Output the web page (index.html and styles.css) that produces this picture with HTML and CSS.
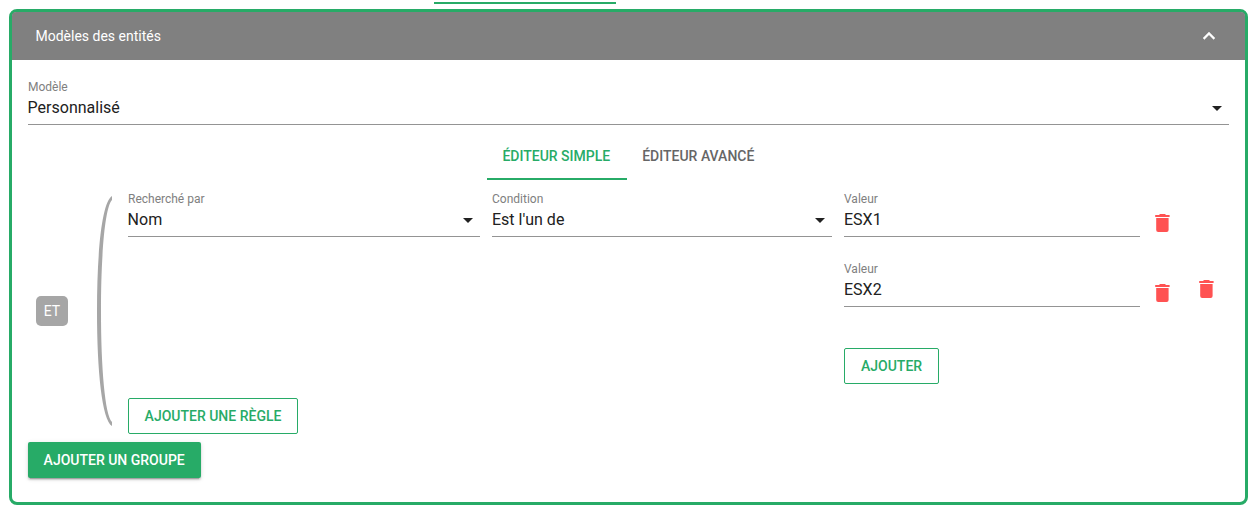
FILE: index.html
```html
<!DOCTYPE html>
<html lang="fr">
<head>
<meta charset="utf-8">
<title>Modèles des entités</title>
<link rel="stylesheet" href="styles.css">
</head>
<body>
<svg class="defs" width="0" height="0">
  <symbol id="trash" viewBox="0 0 24 24"><path d="M19.6 4H16l-1-1h-5l-1 1H5.2v2h14.4zM6.2 19a2 2 0 0 0 2 2h8.4a2 2 0 0 0 2-2V7H6.2z"/></symbol>
  <symbol id="caret" viewBox="0 0 24 24"><path d="M7 10l5 5 5-5z"/></symbol>
</svg>
<div class="outer-tabs"><span class="outer-indicator"></span></div>
<section class="panel">
  <header class="panel-header">
    <span>Modèles des entités</span>
    <svg class="icon chevron" viewBox="0 0 24 24"><path d="M7.41 15.41L12 10.83l4.59 4.58L18 14l-6-6-6 6z"/></svg>
  </header>
  <div class="panel-body">
    <div class="field">
      <label class="label">Modèle</label>
      <div class="value nudged"><span>Personnalisé</span><svg class="icon"><use href="#caret"/></svg></div>
    </div>
    <nav class="tabs">
      <a class="tab active">ÉDITEUR SIMPLE</a>
      <a class="tab">ÉDITEUR AVANCÉ</a>
    </nav>
    <div class="group">
      <span class="operator">ET</span>
      <svg class="bracket" viewBox="0 0 15 230"><path d="M15 0C5 6 0 55 0 115S5 224 15 230V226C8 219 4 172 4 115S8 11 15 4Z"/></svg>
      <div class="rules">
        <div class="rule">
          <div class="field">
            <label class="label">Recherché par</label>
            <div class="value nudged"><span>Nom</span><svg class="icon"><use href="#caret"/></svg></div>
          </div>
          <div class="field">
            <label class="label">Condition</label>
            <div class="value"><span>Est l'un de</span><svg class="icon"><use href="#caret"/></svg></div>
          </div>
          <div class="values">
            <div class="value-row">
              <div class="field"><label class="label">Valeur</label><div class="value"><span>ESX1</span></div></div>
              <svg class="icon delete"><use href="#trash"/></svg>
            </div>
            <div class="value-row">
              <div class="field"><label class="label">Valeur</label><div class="value"><span>ESX2</span></div></div>
              <svg class="icon delete"><use href="#trash"/></svg>
            </div>
            <button class="btn outlined add-value">AJOUTER</button>
          </div>
          <svg class="icon delete rule-delete"><use href="#trash"/></svg>
        </div>
        <button class="btn outlined add-rule">AJOUTER UNE RÈGLE</button>
      </div>
    </div>
    <button class="btn filled">AJOUTER UN GROUPE</button>
  </div>
</section>
</body>
</html>
```
FILE: styles.css
```css
* { box-sizing: border-box; }
body {
  margin: 0;
  height: 509px;
  overflow: hidden;
  background: #fff;
  font-family: Roboto, sans-serif;
  color: #212121;
}
.defs { display: block; }
.outer-tabs { height: 9px; padding: 2px 0 0 434px; }
.outer-indicator { display: block; width: 182px; height: 2px; background: #27ab67; }
.panel {
  width: 1239px;
  height: 496px;
  margin-left: 9px;
  border: 3px solid #27ab67;
  border-radius: 8px;
}
.panel-header {
  display: flex;
  align-items: center;
  justify-content: space-between;
  height: 48px;
  padding: 0 24px 0 23.5px;
  border-radius: 4px 4px 0 0;
  background: #808080;
  color: #fff;
  font-size: 14px;
}
.icon { display: block; flex: none; width: 24px; height: 24px; fill: currentColor; }
.chevron { stroke: currentColor; stroke-width: .4; }
.panel-body { padding: 16px 16px 0; }
.field {
  height: 49px;
  border-bottom: 1px solid #949494;
}
.label {
  display: block;
  padding-top: 4px;
  font-size: 12px;
  line-height: 14px;
  color: #808080;
}
.value {
  display: flex;
  align-items: center;
  justify-content: space-between;
  height: 28px;
  font-size: 16px;
  line-height: 24px;
}
.nudged span { margin-left: -0.4px; }
.tabs { display: flex; justify-content: center; height: 48px; margin-top: 7px; padding-left: 0.6px; }
.tab {
  padding: 0 16px 0 15.6px;
  border-bottom: 2px solid transparent;
  font-size: 14px;
  font-weight: 500;
  line-height: 48px;
  color: #666;
}
.tab.active { padding: 0 16.4px 0 15.2px; border-color: #27ab67; color: #27ab67; }
.group { display: flex; align-items: center; height: 262px; padding-left: 8px; }
.operator {
  width: 32px;
  height: 30px;
  border-radius: 5px;
  background: #a6a6a6;
  color: #fff;
  font-size: 14px;
  line-height: 30px;
  text-align: center;
}
.bracket { flex: none; width: 15px; height: 230px; margin: 0 16px 0 29px; fill: #a6a6a6; }
.rules { display: flex; flex: 1; flex-direction: column; align-items: flex-start; gap: 14px; }
.rule {
  display: grid;
  grid-template-columns: 352px 340px 338px 24px;
  column-gap: 12px;
  height: 196px;
}
.values { display: flex; flex-direction: column; align-items: flex-start; }
.value-row { display: grid; grid-template-columns: 296px 24px; column-gap: 10px; height: 70px; }
.delete { color: #ff5252; }
.value-row .delete { margin-top: 23px; }
.rule-delete { align-self: center; margin-top: 6px; }
.btn {
  height: 36px;
  padding: 0 16px;
  border: 0;
  border-radius: 2px;
  font: 500 14px/36px Roboto, sans-serif;
}
.outlined { border: 1px solid #27ab67; background: #fff; color: #27ab67; line-height: 34px; }
.add-rule { width: 170px; padding: 0 15px; }
.filled {
  display: block;
  padding: 0 16.4px 0 15.6px;
  background: #27ab67;
  color: #fff;
  box-shadow: 0 3px 1px -2px rgba(0,0,0,.2), 0 2px 2px rgba(0,0,0,.14), 0 1px 5px rgba(0,0,0,.12);
}
.add-value { margin-top: 20px; }
```
